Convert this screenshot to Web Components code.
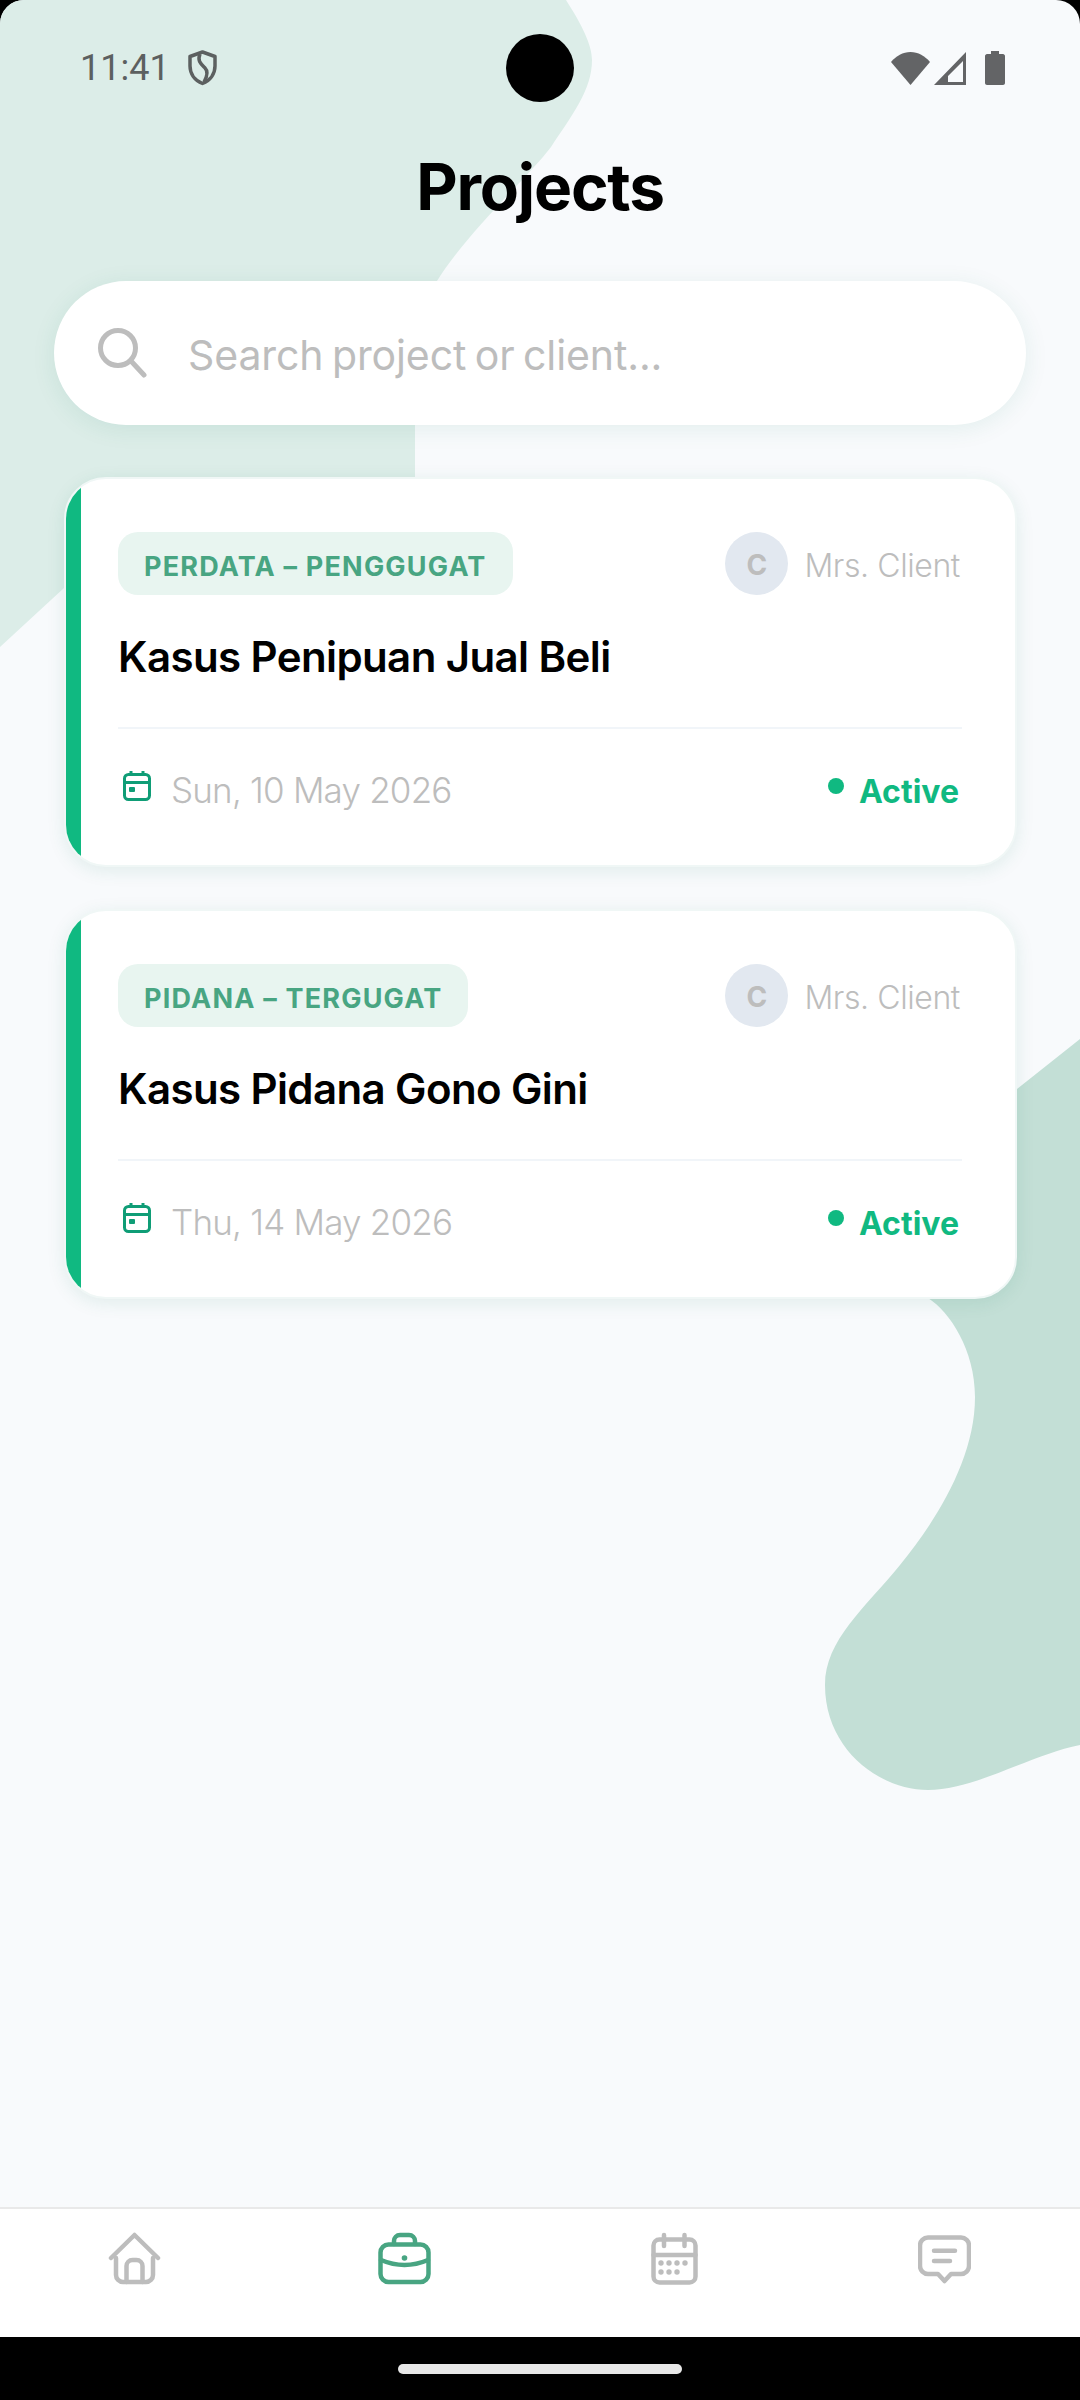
<!DOCTYPE html>
<html lang="en">
<head>
<meta charset="utf-8">
<title>Projects</title>
<style>
  html, body { margin: 0; padding: 0; background: #000; }
  body { width: 1080px; height: 2400px; overflow: hidden; font-family: 'Inter', 'Liberation Sans', sans-serif; }
</style>
</head>
<body>
<app-screen>
  <status-bar time="11:41"></status-bar>
  <page-title>Projects</page-title>
  <search-box placeholder="Search project or client..."></search-box>
  <project-card date="Sun, 10 May 2026">
    <span slot="tag">PERDATA – PENGGUGAT</span>
    <span slot="client">Mrs. Client</span>
    <span slot="title">Kasus Penipuan Jual Beli</span>
  </project-card>
  <project-card date="Thu, 14 May 2026">
    <span slot="tag">PIDANA – TERGUGAT</span>
    <span slot="client">Mrs. Client</span>
    <span slot="title">Kasus Pidana Gono Gini</span>
  </project-card>
  <bottom-nav slot="footer"></bottom-nav>
</app-screen>

<script>
class AppScreen extends HTMLElement {
  constructor() {
    super();
    this.attachShadow({ mode: 'open' });
    this.shadowRoot.innerHTML = `
      <style>
        :host { display: flex; flex-direction: column; position: relative; width: 1080px; height: 2400px;
          background: #f8fafc; border-radius: 24px 24px 0 0; overflow: hidden; }
        .blobs { position: absolute; left: 0; top: 0; }
        .content { position: relative; flex: 1; display: flex; flex-direction: column; }
        .footer { position: relative; }
      </style>
      <svg class="blobs" width="1080" height="2400" viewBox="0 0 1080 2400">
        <path fill="#dcede8" d="M0 0H566C582 25 592 45 592 60C592 90 572 115 551 147C530 175 465 235 437 281L415 330V500L64 588L0 647Z"/>
        <path fill="#c3dfd6" d="M1080 1039L1017 1089L880 1270L928 1298C950 1312 975 1350 975 1397C975 1460 935 1522 900 1565C865 1608 825 1640 825 1685C825 1750 880 1790 928 1790C975 1790 1030 1755 1080 1745Z"/>
      </svg>
      <div class="content"><slot></slot></div>
      <div class="footer"><slot name="footer"></slot></div>
    `;
  }
}

class StatusBar extends HTMLElement {
  constructor() {
    super();
    this.attachShadow({ mode: 'open' });
    this.shadowRoot.innerHTML = `
      <style>
        :host { display: grid; grid-template-columns: 1fr 68px 1fr; height: 136px; padding: 34px 75px 0 75px; box-sizing: border-box;
          color: #5c6060; font-family: 'Roboto', sans-serif; font-size: 36px; }
        .left { display: flex; align-items: center; height: 68px; gap: 18px; padding-left: 5px; line-height: 68px; }
        .cam { width: 68px; height: 68px; border-radius: 50%; background: #000; }
        .right { display: flex; align-items: center; justify-content: flex-end; height: 68px; }
        svg { display: block; }
      </style>
      <div class="left">
        <span id="time"></span>
        <svg width="29" height="36" viewBox="0 0 29 36" fill="none" stroke="#5c6060" stroke-width="3.5">
          <path d="M14.5 2L27 6.5V16C27 24 22 30.5 14.5 33.5C7 30.5 2 24 2 16V6.5Z" stroke-linejoin="round"/>
          <path d="M12 4C9 11 13 14 17 18C20 21 20 25 16 32" />
        </svg>
      </div>
      <div class="cam"></div>
      <div class="right">
        <svg width="39" height="33" viewBox="0 0 39 33"><path fill="#636466" d="M0 10C5 4 12 0 19.5 0S34 4 39 10L19.5 33Z"/></svg>
        <svg style="margin-left:4px" width="32" height="33" viewBox="0 0 32 33"><path fill="#636466" fill-rule="evenodd" d="M0 33L32 0V33ZM14 30H29V9L14 24Z"/></svg>
        <svg style="margin-left:19px" width="20" height="34" viewBox="0 0 20 34"><path fill="#636466" d="M6 0H14V3H18C19 3 20 4 20 5V32C20 33 19 34 18 34H2C1 34 0 33 0 32V5C0 4 1 3 2 3H6Z"/></svg>
      </div>
    `;
    this.shadowRoot.getElementById('time').textContent = this.getAttribute('time');
  }
}

class PageTitle extends HTMLElement {
  constructor() {
    super();
    this.attachShadow({ mode: 'open' });
    this.shadowRoot.innerHTML = `
      <style>
        :host { display: block; height: 145px; text-align: center; color: #000;
          font-size: 64px; font-weight: 700; line-height: 102px; letter-spacing: -1.2px; }
      </style>
      <slot></slot>
    `;
  }
}

class SearchBox extends HTMLElement {
  constructor() {
    super();
    this.attachShadow({ mode: 'open' });
    this.shadowRoot.innerHTML = `
      <style>
        :host { display: flex; align-items: center; gap: 40px; height: 144px; margin: 0 54px 52px; padding-left: 44px; box-sizing: border-box;
          background: #fff; border-radius: 72px; box-shadow: 0 4px 24px rgba(16, 120, 90, 0.09);
          color: #bdbdbd; font-size: 41px; letter-spacing: -0.1px; word-spacing: -3px; }
        svg { display: block; flex: none; }
        span { padding-top: 3px; }
      </style>
      <svg width="50" height="50" viewBox="0 0 50 50" fill="none" stroke="#bdbdbd" stroke-width="5" stroke-linecap="round">
        <circle cx="20" cy="20" r="17.5"/>
        <path d="M33 33L46 47"/>
      </svg>
      <span id="text"></span>
    `;
    this.shadowRoot.getElementById('text').textContent = this.getAttribute('placeholder');
  }
}

class ProjectCard extends HTMLElement {
  constructor() {
    super();
    this.attachShadow({ mode: 'open' });
    this.shadowRoot.innerHTML = `
      <style>
        :host { display: flex; width: 953px; height: 390px; margin: 0 0 42px 64px; box-sizing: border-box;
          background: #fff; border: 2px solid #f0f7f6; border-radius: 42px; overflow: hidden; 
          box-shadow: 0 4px 18px rgba(16, 120, 90, 0.1); }
        .bar { flex: none; width: 15px; background: #10b981; }
        .body { flex: 1; padding: 53px 53px 0 37px; }
        .top { display: flex; justify-content: space-between; align-items: center; height: 63px; }
        .tag { height: 63px; line-height: 69px; padding: 0 26px; background: #e8f5f0; border-radius: 20px;
          color: #48a582; font-size: 27px; font-weight: 700; letter-spacing: 1.2px; }
        .client { display: flex; align-items: center; gap: 16px; color: #bdbdbd; font-size: 32px; font-weight: 300; letter-spacing: -0.4px; }
        .client slot { display: block; padding: 4px 2px 0 0; }
        .avatar { width: 63px; height: 63px; border-radius: 50%; background: #e2e8f0; color: #bdbdbd;
          font-size: 28px; font-weight: 700; text-align: center; line-height: 67px; letter-spacing: 0; }
        .title { margin-top: 34px; height: 56px; line-height: 56px; color: #000; font-size: 42px; font-weight: 600; letter-spacing: -0.6px; }
        .rule { margin-top: 42px; height: 2px; background: #f1f5f9; }
        .foot { display: flex; justify-content: space-between; align-items: center; height: 50px; margin-top: 36px; }
        .date { display: flex; align-items: center; gap: 20px; color: #bdbdbd; font-size: 35px; font-weight: 300; letter-spacing: -0.8px; padding-left: 5px; }
        .date svg { display: block; margin-top: -10px; }
        .status { display: flex; align-items: center; gap: 15px; color: #10b981; font-size: 32px; font-weight: 700; padding: 2px 3px 0 0; }
        .dot { width: 16px; height: 16px; border-radius: 50%; background: #10b981; margin-top: -10px; }
      </style>
      <div class="bar"></div>
      <div class="body">
        <div class="top">
          <div class="tag"><slot name="tag"></slot></div>
          <div class="client"><div class="avatar">C</div><slot name="client"></slot></div>
        </div>
        <div class="title"><slot name="title"></slot></div>
        <div class="rule"></div>
        <div class="foot">
          <div class="date">
            <svg width="28" height="31" viewBox="0 0 28 31" fill="none" stroke="#0f9d76" stroke-width="3">
              <rect x="1.5" y="4.5" width="25" height="25" rx="4"/>
              <path d="M1.5 12.5H26.5M8 1V6M20 1V6"/>
              <rect x="6" y="17" width="6" height="5" rx="1" fill="#0f9d76" stroke="none"/>
            </svg>
            <span id="date"></span>
          </div>
          <div class="status"><div class="dot"></div><span>Active</span></div>
        </div>
      </div>
    `;
    this.shadowRoot.getElementById('date').textContent = this.getAttribute('date');
  }
}

class BottomNav extends HTMLElement {
  constructor() {
    super();
    this.attachShadow({ mode: 'open' });
    this.shadowRoot.innerHTML = `
      <style>
        :host { display: block; background: #fff; }
        .tabs { display: grid; grid-template-columns: repeat(4, 1fr); height: 128px; padding-right: 1px; border-top: 2px solid #e9e9e9; }
        .tab { display: flex; justify-content: center; align-items: flex-start; padding-top: 23px; }
        svg { display: block; }
        .gesture { display: flex; justify-content: center; height: 63px; padding-top: 27px; box-sizing: border-box; background: #000; }
        .pill { width: 284px; height: 10px; border-radius: 5px; background: #e8e8e8; }
      </style>
      <div class="tabs">
        <div class="tab">
          <svg width="53" height="53" viewBox="0 0 53 53" fill="none" stroke="#bdbdbd" stroke-width="4.5" stroke-linecap="round" stroke-linejoin="round">
            <path d="M3 26L26.5 3L50 26"/>
            <path d="M8 26V43a7 7 0 0 0 7 7H38a7 7 0 0 0 7-7V26"/>
            <path d="M18.5 50V34a6 6 0 0 1 6-6h4a6 6 0 0 1 6 6V50"/>
          </svg>
        </div>
        <div class="tab">
          <svg width="53" height="53" viewBox="0 0 53 53" fill="none" stroke="#48a582" stroke-width="4.5" stroke-linecap="round">
            <rect x="2.5" y="12.5" width="48" height="37.5" rx="8"/>
            <path d="M16 12V9a6 6 0 0 1 6-6h9a6 6 0 0 1 6 6V12"/>
            <path d="M3 28Q26.5 38 50 28"/>
            <circle cx="26.5" cy="26" r="2.8" fill="#48a582" stroke="none"/>
          </svg>
        </div>
        <div class="tab">
          <svg width="47" height="53" viewBox="0 0 47 53" fill="none" stroke="#bdbdbd" stroke-width="4.5" stroke-linecap="round">
            <rect x="2.5" y="7.5" width="42" height="43" rx="6"/>
            <path d="M13 3V14M33.5 3V14M2.5 23H44.5"/>
            <g fill="#bdbdbd" stroke="none">
              <circle cx="10" cy="31" r="2.7"/><circle cx="18" cy="31" r="2.7"/><circle cx="26" cy="31" r="2.7"/><circle cx="34" cy="31" r="2.7"/>
              <circle cx="10" cy="40" r="2.7"/><circle cx="18" cy="40" r="2.7"/><circle cx="26" cy="40" r="2.7"/>
            </g>
          </svg>
        </div>
        <div class="tab">
          <svg width="53" height="53" viewBox="0 0 53 53" fill="none" stroke="#bdbdbd" stroke-width="4.5" stroke-linecap="round" stroke-linejoin="round" style="margin-top:3px">
            <path d="M10 2.5H43a8 8 0 0 1 8 8V31a8 8 0 0 1-8 8H33L26.5 46L20 39H10a8 8 0 0 1-8-8V10.5a8 8 0 0 1 8-8Z"/>
            <path d="M16 15.7H37M16 26H32"/>
          </svg>
        </div>
      </div>
      <div class="gesture"><div class="pill"></div></div>
    `;
  }
}

customElements.define('app-screen', AppScreen);
customElements.define('status-bar', StatusBar);
customElements.define('page-title', PageTitle);
customElements.define('search-box', SearchBox);
customElements.define('project-card', ProjectCard);
customElements.define('bottom-nav', BottomNav);
</script>
</body>
</html>
